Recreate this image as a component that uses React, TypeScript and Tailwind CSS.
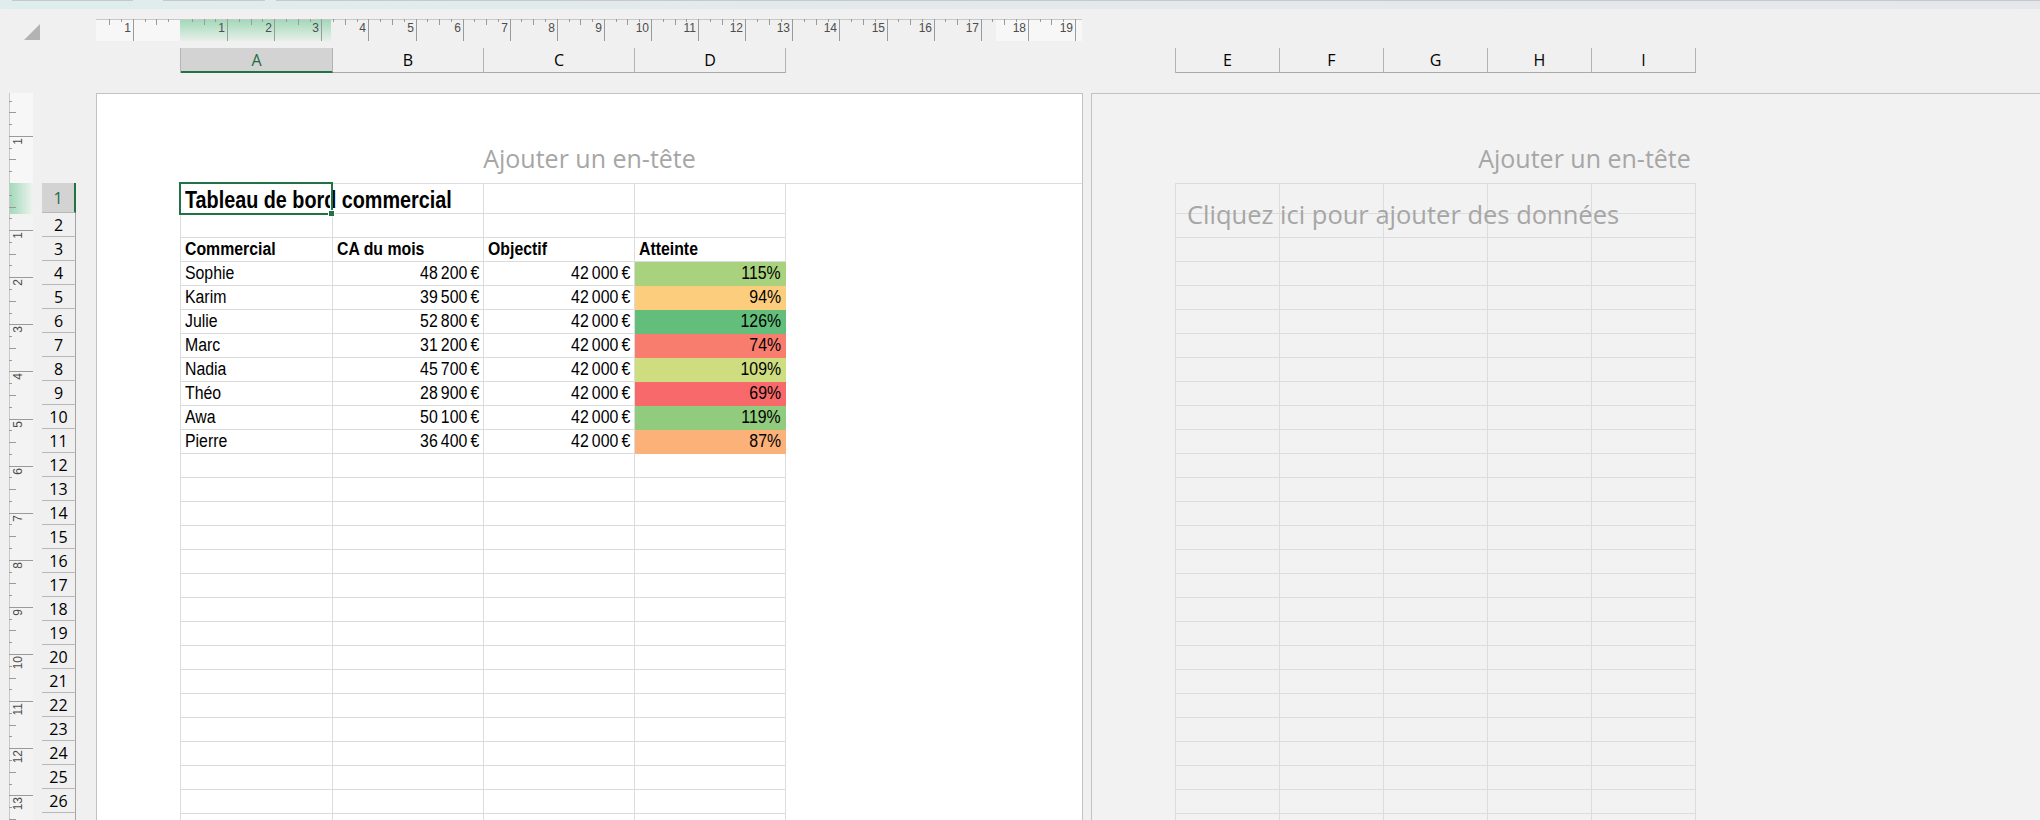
import React from 'react'

const CM = 47.1
const NB = '\u202f'

const CELL_FONT = 'font-[family-name:Liberation_Sans,Arial,sans-serif]'
const UI_FONT = 'font-[family-name:Open_Sans,Noto_Sans,sans-serif]'

const pageCols = ['w-[152px]', 'w-[151px]', 'w-[151px]', 'w-[151px]']
const sideCols = ['w-[104px]', 'w-[104px]', 'w-[104px]', 'w-[104px]', 'w-[104px]']

type Sale = { name: string; ca: string; pct: string; fill: string }

const sales: Sale[] = [
  { name: 'Sophie', ca: `48${NB}200${NB}€`, pct: '115%', fill: 'bg-[#a9d27f] border-[#a9d27f]' },
  { name: 'Karim', ca: `39${NB}500${NB}€`, pct: '94%', fill: 'bg-[#fdcd7e] border-[#fdcd7e]' },
  { name: 'Julie', ca: `52${NB}800${NB}€`, pct: '126%', fill: 'bg-[#63be7b] border-[#63be7b]' },
  { name: 'Marc', ca: `31${NB}200${NB}€`, pct: '74%', fill: 'bg-[#f97d6f] border-[#f97d6f]' },
  { name: 'Nadia', ca: `45${NB}700${NB}€`, pct: '109%', fill: 'bg-[#cfdd81] border-[#cfdd81]' },
  { name: 'Théo', ca: `28${NB}900${NB}€`, pct: '69%', fill: 'bg-[#f8696b] border-[#f8696b]' },
  { name: 'Awa', ca: `50${NB}100${NB}€`, pct: '119%', fill: 'bg-[#90cb7e] border-[#90cb7e]' },
  { name: 'Pierre', ca: `36${NB}400${NB}€`, pct: '87%', fill: 'bg-[#fcb179] border-[#fcb179]' },
]

const objective = `42${NB}000${NB}€`
const emptyRows = Array.from({ length: 16 }, (_, i) => i + 12)

function px(v: number) {
  return Math.round(v) + 0.5
}

function HRuler() {
  const W = 986
  const O = 84
  const marks: React.ReactNode[] = []
  for (let q = -8; q <= 80; q++) {
    if (q === 0) continue
    const x = O + (q / 4) * CM
    if (x < 2 || x > W - 2) continue
    if (q % 4 === 0) {
      marks.push(<line key={q} x1={px(x)} x2={px(x)} y1={0} y2={22} stroke="#9a9a9a" />)
      marks.push(
        <text key={'n' + q} x={Math.round(x) - 2} y={13} textAnchor="end" fontSize={12} fill="#4d4d4d">
          {Math.abs(q / 4)}
        </text>
      )
    } else {
      const len = q % 2 === 0 ? 6 : 3
      marks.push(<line key={q} x1={px(x)} x2={px(x)} y1={0} y2={len} stroke="#9a9a9a" />)
    }
  }
  return (
    <svg width={W} height={22} className="block font-[family-name:Liberation_Sans,sans-serif]">
      <defs>
        <linearGradient id="hg" x1="0" y1="0" x2="0" y2="1">
          <stop offset="0" stopColor="#9fd8b7" />
          <stop offset="1" stopColor="#e8efea" />
        </linearGradient>
      </defs>
      <rect x={0} y={0} width={O} height={22} fill="#f7f7f7" />
      <rect x={900} y={0} width={W - 900} height={22} fill="#f7f7f7" />
      <rect x={O} y={0} width={151} height={22} fill="url(#hg)" />
      <line x1={0} x2={W} y1={0.5} y2={0.5} stroke="#c8c8c8" />
      {marks}
    </svg>
  )
}

function VRuler() {
  const H = 727
  const O = 90
  const marks: React.ReactNode[] = []
  for (let q = -8; q <= 60; q++) {
    if (q === 0) continue
    const y = O + (q / 4) * CM
    if (y < 2 || y > H) continue
    if (q % 4 === 0) {
      marks.push(<line key={q} x1={0} x2={24} y1={px(y)} y2={px(y)} stroke="#9a9a9a" />)
      marks.push(
        <text
          key={'n' + q}
          transform={`translate(13 ${Math.round(y) + 2}) rotate(-90)`}
          textAnchor="end"
          fontSize={12}
          fill="#4d4d4d"
        >
          {Math.abs(q / 4)}
        </text>
      )
    } else {
      const len = q % 2 === 0 ? 7 : 3
      marks.push(<line key={q} x1={0} x2={len} y1={px(y)} y2={px(y)} stroke="#9a9a9a" />)
    }
  }
  return (
    <svg width={24} height={H} className="block font-[family-name:Liberation_Sans,sans-serif]">
      <defs>
        <linearGradient id="vg" x1="0" y1="0" x2="1" y2="0">
          <stop offset="0" stopColor="#9fd8b7" />
          <stop offset="1" stopColor="#eef3ef" />
        </linearGradient>
      </defs>
      <rect x={0} y={0} width={24} height={O} fill="#f7f7f7" />
      <rect x={0} y={O} width={24} height={H - O} fill="#f3f3f3" />
      <rect x={0} y={O} width={24} height={31} fill="url(#vg)" />
      <line x1={0.5} x2={0.5} y1={0} y2={H} stroke="#c8c8c8" />
      {marks}
    </svg>
  )
}

function Cell({
  w,
  right,
  bold,
  fill,
  children,
}: {
  w: string
  right?: boolean
  bold?: boolean
  fill?: string
  children?: React.ReactNode
}) {
  return (
    <div
      className={[
        'shrink-0 h-full border-r border-b flex items-end px-[4px] pb-[2px] leading-[20px] text-[18px] text-black whitespace-nowrap',
        w,
        fill ? fill : 'border-[#dcdcdc]',
        right ? 'justify-end' : 'justify-start',
        bold ? 'font-bold' : '',
      ].join(' ')}
    >
      {/* narrow face: Aptos Narrow is not installed, squeeze the sans */}
      <span className={right ? 'inline-block scale-x-[0.88] origin-right' : 'inline-block scale-x-[0.88] origin-left'}>
        {children}
      </span>
    </div>
  )
}

function EmptyRow({ cols, tall }: { cols: string[]; tall?: boolean }) {
  return (
    <div className={tall ? 'flex h-[30px]' : 'flex h-[24px]'}>
      {cols.map((w, i) => (
        <div key={i} className={'shrink-0 h-full border-r border-b border-[#dcdcdc] ' + w} />
      ))}
    </div>
  )
}

function SalesGrid() {
  return (
    <div className={'relative border-l border-t border-[#dcdcdc] ' + CELL_FONT}>
      {/* row 1 : title overflowing into B1 */}
      <div className="flex h-[30px]">
        <div className="shrink-0 w-[152px] h-full border-b border-r border-b-[#dcdcdc] border-r-transparent flex items-end px-[4px] overflow-visible relative z-10">
          <span className="inline-block origin-left scale-x-[0.86] whitespace-nowrap text-[23px] leading-[26px] font-bold text-black">
            Tableau de bord commercial
          </span>
        </div>
        <div className="shrink-0 w-[151px] h-full border-r border-b border-[#dcdcdc]" />
        <div className="shrink-0 w-[151px] h-full border-r border-b border-[#dcdcdc]" />
        <div className="shrink-0 w-[151px] h-full border-r border-b border-[#dcdcdc]" />
      </div>
      <EmptyRow cols={pageCols} />
      <div className="flex h-[24px]">
        <Cell w="w-[152px]" bold>Commercial</Cell>
        <Cell w="w-[151px]" bold>CA du mois</Cell>
        <Cell w="w-[151px]" bold>Objectif</Cell>
        <Cell w="w-[151px]" bold>Atteinte</Cell>
      </div>
      {sales.map((s) => (
        <div key={s.name} className="flex h-[24px]">
          <Cell w="w-[152px]">{s.name}</Cell>
          <Cell w="w-[151px]" right>{s.ca}</Cell>
          <Cell w="w-[151px]" right>{objective}</Cell>
          <Cell w="w-[151px]" right fill={s.fill}>{s.pct}</Cell>
        </div>
      ))}
      {emptyRows.map((r) => (
        <EmptyRow key={r} cols={pageCols} />
      ))}

      {/* active cell A1 */}
      <div className="absolute left-[-2px] top-[-2px] w-[154px] h-[33px] border-2 border-[#217346] shadow-[inset_0_0_0_1px_white] z-20 pointer-events-none" />
      <div className="absolute left-[147px] top-[26px] w-[7px] h-[7px] bg-[#217346] border border-white z-30" />
    </div>
  )
}

function ColHeader({ label, w, active }: { label: string; w: string; active?: boolean }) {
  return (
    <div
      className={[
        'shrink-0 h-full flex items-center justify-center border-r border-[#b4b4b4] text-[16px]',
        w,
        active
          ? 'bg-[#d3d3d3] border-b-2 border-b-[#217346] text-[#1e6b45]'
          : 'border-b border-b-[#a9a9a9] text-black',
      ].join(' ')}
    >
      {label}
    </div>
  )
}

function RowHeader({ n }: { n?: number }) {
  const active = n === 1
  return (
    <div
      className={[
        'flex items-center justify-center border-b border-[#b8b8b8] text-[16px]',
        active ? 'h-[30px] bg-[#d3d3d3] border-r-2 border-r-[#217346] text-[#1e6b45]' : 'h-[24px] border-r border-r-[#a4a4a4] text-black',
      ].join(' ')}
    >
      {n}
    </div>
  )
}

export default function App() {
  const rowNumbers = Array.from({ length: 26 }, (_, i) => i + 1)
  return (
    <div className={'w-[2040px] h-[820px] overflow-hidden bg-[#f0f0f0] flex flex-col ' + UI_FONT}>
      {/* ribbon edge */}
      <div className="h-[9px] shrink-0 flex items-start bg-linear-to-r from-[#dfeded] via-[#e4e9eb] to-[#e6e7eb]">
        <div className="ml-[12px] w-[121px] h-px bg-[#c6c9cb]" />
        <div className="ml-[30px] w-[102px] h-px bg-[#c6c9cb]" />
        <div className="ml-[11px] flex-1 h-px bg-[#c6c9cb]" />
      </div>

      {/* ruler */}
      <div className="flex mt-[10px] h-[22px] shrink-0">
        <div className="w-[96px] shrink-0 pl-[24px] pt-[5px]">
          <svg width={16} height={16} className="block">
            <polygon points="16,0 16,16 0,16" fill="#b3b3b3" />
          </svg>
        </div>
        <HRuler />
      </div>

      {/* column headers */}
      <div className="flex mt-[7px] h-[25px] shrink-0">
        <div className="w-[96px] shrink-0" />
        <div className="w-[987px] shrink-0 pl-[84px] flex">
          <div className="flex h-full border-l border-[#b4b4b4]">
            <ColHeader label="A" w="w-[152px]" active />
            <ColHeader label="B" w="w-[151px]" />
            <ColHeader label="C" w="w-[151px]" />
            <ColHeader label="D" w="w-[151px]" />
          </div>
        </div>
        <div className="w-[8px] shrink-0" />
        <div className="shrink-0 pl-[84px] flex">
          <div className="flex h-full border-l border-[#b4b4b4]">
            {['E', 'F', 'G', 'H', 'I'].map((l) => (
              <ColHeader key={l} label={l} w="w-[104px]" />
            ))}
          </div>
        </div>
      </div>

      {/* pages */}
      <div className="flex mt-[20px] flex-1 min-h-0">
        <div className="w-[96px] shrink-0 flex">
          <div className="ml-[9px]">
            <VRuler />
          </div>
          <div className="ml-[9px] w-[34px] pt-[90px]">
            {rowNumbers.map((n) => (
              <RowHeader key={n} n={n} />
            ))}
            <RowHeader />
          </div>
        </div>

        <div className="w-[987px] shrink-0 bg-white border border-b-0 border-[#c2c2c2] flex flex-col">
          <div className="h-[89px] shrink-0 flex justify-center pt-[48px]">
            <span className="text-[25px] leading-[32px] text-[#a6a6a6]">Ajouter un en-tête</span>
          </div>
          <div className="pl-[83px]">
            <SalesGrid />
          </div>
        </div>

        <div className="ml-[8px] w-[987px] shrink-0 bg-[#f2f2f2] border border-b-0 border-[#c2c2c2] flex flex-col relative">
          <div className="h-[89px] shrink-0 flex justify-center pt-[48px]">
            <span className="text-[25px] leading-[32px] text-[#a6a6a6]">Ajouter un en-tête</span>
          </div>
          <div className="pl-[83px]">
            <div className="border-l border-t border-[#dcdcdc] w-max">
              <EmptyRow cols={sideCols} tall />
              {Array.from({ length: 26 }, (_, i) => (
                <EmptyRow key={i} cols={sideCols} />
              ))}
            </div>
          </div>
          <div className="absolute left-[95px] top-[104px] text-[25.5px] leading-[32px] text-[#a6a6a6] whitespace-nowrap">
            Cliquez ici pour ajouter des données
          </div>
        </div>
      </div>
    </div>
  )
}
